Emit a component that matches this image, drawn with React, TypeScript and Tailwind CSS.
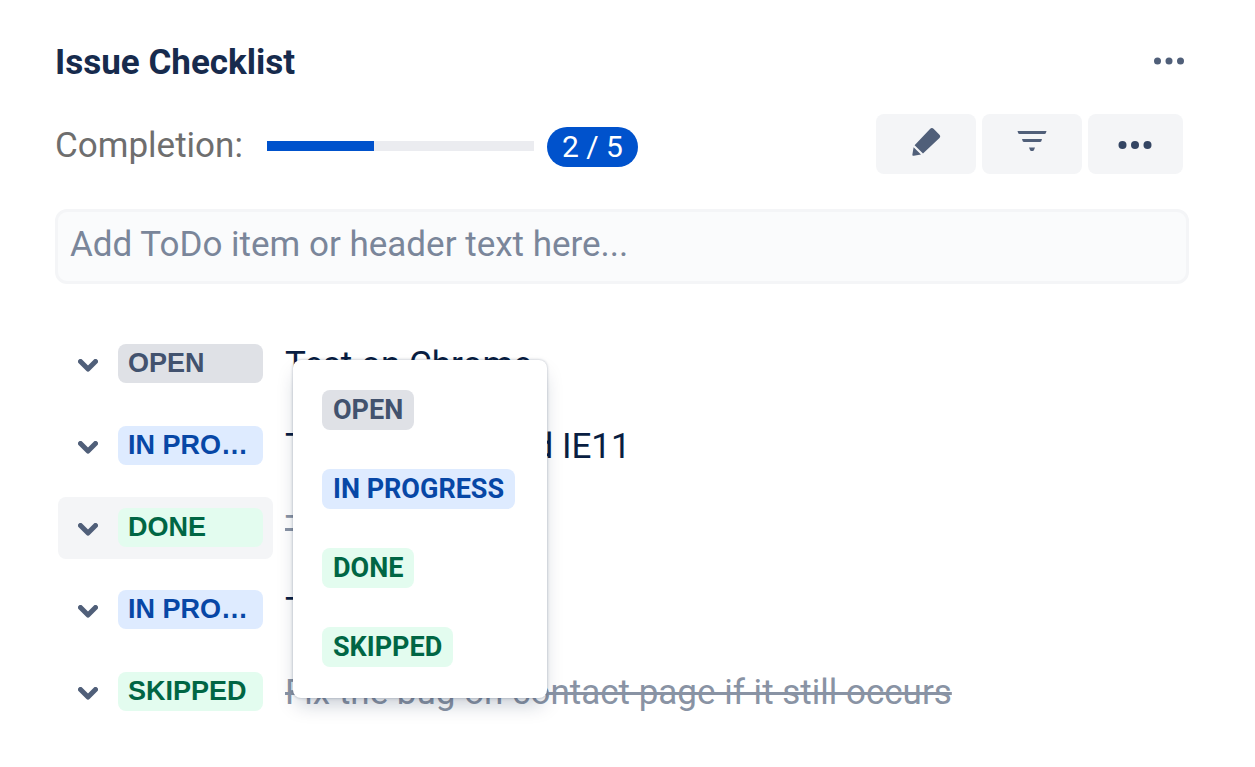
import { useState } from "react";

const statusStyles: Record<string, string> = {
  OPEN: "bg-[#dfe1e6] text-[#42526e]",
  "IN PROGRESS": "bg-[#deebff] text-[#0747a6]",
  DONE: "bg-[#e3fcef] text-[#006644]",
  SKIPPED: "bg-[#e3fcef] text-[#006644]",
};

const statuses = ["OPEN", "IN PROGRESS", "DONE", "SKIPPED"];

const initialItems = [
  { id: 1, status: "OPEN", text: "Test on Chrome" },
  { id: 2, status: "IN PROGRESS", text: "Test on Edge and IE11" },
  { id: 3, status: "DONE", text: "Test on Firefox" },
  { id: 4, status: "IN PROGRESS", text: "Test on Safari" },
  { id: 5, status: "SKIPPED", text: "Fix the bug on contact page if it still occurs" },
];

function isClosed(status: string) {
  return status === "DONE" || status === "SKIPPED";
}

function PencilIcon() {
  return (
    <svg width="30" height="30" viewBox="0 0 30 30" fill="#505f79" aria-hidden="true">
      <path d="M3.600 18.200 19 2a2.600 2.600 0 0 1 3.800 0l5.400 5.400a2.600 2.600 0 0 1 0 3.800L12 26.600z" />
      <path d="M2.600 20.200 10 27.600l-7.200 1.200c-1 .2-1.600-.4-1.400-1.400z" />
    </svg>
  );
}

function FilterIcon() {
  return (
    <svg width="30" height="22" viewBox="0 0 30 22" fill="#505f79" aria-hidden="true">
      <path d="M.5 1h29l-.7 2.200a1.500 1.500 0 0 1-1.300.800h-25a1.500 1.500 0 0 1-1.300-.800z" />
      <path d="M5 9h20l-.7 2.200a1.500 1.500 0 0 1-1.300.800H7a1.500 1.500 0 0 1-1.300-.800z" />
      <path d="M12 17.500h6l-1 2.500a1.500 1.500 0 0 1-1.300 1h-1.400a1.500 1.500 0 0 1-1.300-1z" />
    </svg>
  );
}

function ChevronIcon() {
  return (
    <svg
      width="20"
      height="13"
      viewBox="0 0 20 13"
      fill="none"
      stroke="#505f79"
      strokeWidth="5"
      strokeLinecap="round"
      strokeLinejoin="round"
      aria-hidden="true"
    >
      <path d="M2.500 2.500 10 10 17.500 2.500" />
    </svg>
  );
}

export default function App() {
  const [items, setItems] = useState(initialItems);
  const [openId, setOpenId] = useState<number | null>(1);

  const done = items.filter((item) => isClosed(item.status)).length;

  const changeStatus = (id: number, status: string) => {
    setItems(items.map((item) => (item.id === id ? { ...item, status } : item)));
    setOpenId(null);
  };

  return (
    <main className="min-h-screen bg-white pt-[42px] pb-10 pl-[55px] pr-[66px] font-[Roboto,sans-serif] text-[35px] leading-[42px]">
      {/* Header */}
      <header className="flex items-center justify-between">
        <h1 className="font-bold text-[#172b4d]">Issue Checklist</h1>
        <button type="button" aria-label="Panel actions" className="mr-1 mb-1">
          <svg width="32" height="8" viewBox="0 0 32 8" fill="#505f79" aria-hidden="true">
            <circle cx="4.500" cy="4" r="3.500" />
            <circle cx="16" cy="4" r="3.500" />
            <circle cx="27.500" cy="4" r="3.500" />
          </svg>
        </button>
      </header>

      {/* Completion and toolbar */}
      <div className="mt-[30px] flex items-center">
        <span id="completion" className="pt-1 text-[#6e6e6e]">Completion:</span>
        <div
          role="progressbar"
          aria-labelledby="completion"
          aria-valuenow={done}
          aria-valuemax={items.length}
          className="ml-6 mt-1 h-[10px] w-[267px] bg-[#ebecf0]"
        >
          <div className="h-full bg-[#0052cc]" style={{ width: `${(done / items.length) * 100}%` }} />
        </div>
        <span className="ml-[13px] mt-[6px] rounded-full bg-[#0052cc] px-[15px] text-[30px] leading-[40px] text-white">
          {done} / {items.length}
        </span>
        <div className="ml-auto mr-[6px] flex gap-1.5">
          <button type="button" aria-label="Edit" className="flex h-[60px] w-[100px] items-center justify-center rounded-lg bg-[#f4f5f7] pb-1">
            <PencilIcon />
          </button>
          <button type="button" aria-label="Filter" className="flex h-[60px] w-[100px] items-center justify-center rounded-lg bg-[#f4f5f7] pb-[6px]">
            <FilterIcon />
          </button>
          <button type="button" aria-label="More" className="flex h-[60px] w-[95px] items-center justify-center rounded-lg bg-[#f4f5f7] pr-px">
            <svg width="34" height="8" viewBox="0 0 34 8" fill="#344563" className="mt-[2px]" aria-hidden="true">
              <circle cx="4.500" cy="4" r="4" />
              <circle cx="17" cy="4" r="4" />
              <circle cx="29.500" cy="4" r="4" />
            </svg>
          </button>
        </div>
      </div>

      <input
        type="text"
        aria-label="New checklist item"
        placeholder="Add ToDo item or header text here..."
        className="mt-[35px] block h-[75px] w-full rounded-xl border-[3px] border-[#f4f5f7] bg-[#fafbfc] px-3 pb-1 text-[#172b4d] outline-none placeholder:text-[#7a869a]"
      />

      {/* Checklist */}
      <ul className="mt-[49px] flex flex-col gap-5 pl-[3px]">
        {items.map((item) => (
          <li key={item.id} className="relative flex items-center">
            <button
              type="button"
              aria-expanded={openId === item.id}
              onClick={() => setOpenId(openId === item.id ? null : item.id)}
              className={`flex h-[62px] w-[215px] shrink-0 items-center gap-5 rounded-lg pr-[10px] pb-px pl-5 ${
                item.id === 3 ? "bg-[#f4f5f7]" : "hover:bg-[#f4f5f7]"
              }`}
            >
              <span className="mt-1 shrink-0">
                <ChevronIcon />
              </span>
              <span
                className={`h-[39px] w-[145px] truncate rounded-lg px-[10px] text-left font-['Liberation_Sans',sans-serif] text-[27px] leading-[38px] font-bold ${statusStyles[item.status]}`}
              >
                {item.status}
              </span>
            </button>
            <span
              className={`ml-3 pt-[2px] ${
                isClosed(item.status)
                  ? "text-[#8993a4] line-through decoration-[3px]"
                  : "text-[#091e42]"
              }`}
            >
              {item.text}
            </span>

            {openId === item.id && (
              <div className="absolute top-[27px] left-[235px] z-10 flex w-[254px] flex-col items-start gap-[39px] rounded-lg bg-white px-[29px] pt-[30px] pb-[31px] shadow-[0_10px_20px_-5px_rgba(9,30,66,0.25),0_0_3px_rgba(9,30,66,0.31)]">
                {statuses.map((status) => (
                  <button
                    key={status}
                    type="button"
                    onClick={() => changeStatus(item.id, status)}
                    className={`h-10 rounded-lg px-[11px] text-[27px] leading-[38px] font-bold whitespace-nowrap ${statusStyles[status]}`}
                  >
                    {status}
                  </button>
                ))}
              </div>
            )}
          </li>
        ))}
      </ul>
    </main>
  );
}
